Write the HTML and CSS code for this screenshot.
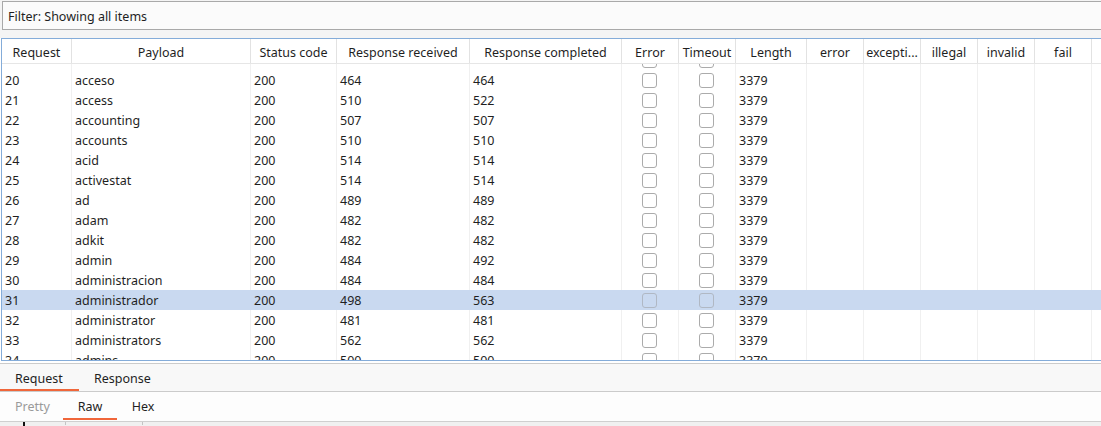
FILE: index.html
```html
<!DOCTYPE html>
<html>
<head>
<meta charset="utf-8">
<link rel="stylesheet" href="styles.css">
</head>
<body>
<div class="top">
  <div class="filter">Filter: Showing all items</div>
</div>
<div class="table">
  <div class="grid thead">
    <span>Request</span><span>Payload</span><span>Status code</span><span>Response received</span><span>Response completed</span><span>Error</span><span>Timeout</span><span>Length</span><span>error</span><span>excepti...</span><span>illegal</span><span>invalid</span><span>fail</span><span></span>
  </div>
  <div class="tbody">
    <div class="rows">
      <div class="grid row"><span></span><span></span><span></span><span></span><span></span><span class="cb"><i></i></span><span class="cb"><i></i></span><span></span><span></span><span></span><span></span><span></span><span></span><span></span></div>
      <div class="grid row"><span>20</span><span>acceso</span><span>200</span><span>464</span><span>464</span><span class="cb"><i></i></span><span class="cb"><i></i></span><span>3379</span><span></span><span></span><span></span><span></span><span></span><span></span></div>
      <div class="grid row"><span>21</span><span>access</span><span>200</span><span>510</span><span>522</span><span class="cb"><i></i></span><span class="cb"><i></i></span><span>3379</span><span></span><span></span><span></span><span></span><span></span><span></span></div>
      <div class="grid row"><span>22</span><span>accounting</span><span>200</span><span>507</span><span>507</span><span class="cb"><i></i></span><span class="cb"><i></i></span><span>3379</span><span></span><span></span><span></span><span></span><span></span><span></span></div>
      <div class="grid row"><span>23</span><span>accounts</span><span>200</span><span>510</span><span>510</span><span class="cb"><i></i></span><span class="cb"><i></i></span><span>3379</span><span></span><span></span><span></span><span></span><span></span><span></span></div>
      <div class="grid row"><span>24</span><span>acid</span><span>200</span><span>514</span><span>514</span><span class="cb"><i></i></span><span class="cb"><i></i></span><span>3379</span><span></span><span></span><span></span><span></span><span></span><span></span></div>
      <div class="grid row"><span>25</span><span>activestat</span><span>200</span><span>514</span><span>514</span><span class="cb"><i></i></span><span class="cb"><i></i></span><span>3379</span><span></span><span></span><span></span><span></span><span></span><span></span></div>
      <div class="grid row"><span>26</span><span>ad</span><span>200</span><span>489</span><span>489</span><span class="cb"><i></i></span><span class="cb"><i></i></span><span>3379</span><span></span><span></span><span></span><span></span><span></span><span></span></div>
      <div class="grid row"><span>27</span><span>adam</span><span>200</span><span>482</span><span>482</span><span class="cb"><i></i></span><span class="cb"><i></i></span><span>3379</span><span></span><span></span><span></span><span></span><span></span><span></span></div>
      <div class="grid row"><span>28</span><span>adkit</span><span>200</span><span>482</span><span>482</span><span class="cb"><i></i></span><span class="cb"><i></i></span><span>3379</span><span></span><span></span><span></span><span></span><span></span><span></span></div>
      <div class="grid row"><span>29</span><span>admin</span><span>200</span><span>484</span><span>492</span><span class="cb"><i></i></span><span class="cb"><i></i></span><span>3379</span><span></span><span></span><span></span><span></span><span></span><span></span></div>
      <div class="grid row"><span>30</span><span>administracion</span><span>200</span><span>484</span><span>484</span><span class="cb"><i></i></span><span class="cb"><i></i></span><span>3379</span><span></span><span></span><span></span><span></span><span></span><span></span></div>
      <div class="grid row selected"><span>31</span><span>administrador</span><span>200</span><span>498</span><span>563</span><span class="cb"><i></i></span><span class="cb"><i></i></span><span>3379</span><span></span><span></span><span></span><span></span><span></span><span></span></div>
      <div class="grid row"><span>32</span><span>administrator</span><span>200</span><span>481</span><span>481</span><span class="cb"><i></i></span><span class="cb"><i></i></span><span>3379</span><span></span><span></span><span></span><span></span><span></span><span></span></div>
      <div class="grid row"><span>33</span><span>administrators</span><span>200</span><span>562</span><span>562</span><span class="cb"><i></i></span><span class="cb"><i></i></span><span>3379</span><span></span><span></span><span></span><span></span><span></span><span></span></div>
      <div class="grid row"><span>34</span><span>admins</span><span>200</span><span>500</span><span>500</span><span class="cb"><i></i></span><span class="cb"><i></i></span><span>3379</span><span></span><span></span><span></span><span></span><span></span><span></span></div>
    </div>
  </div>
</div>
<div class="tabs">
  <div class="tab tab-req active">Request</div>
  <div class="tab">Response</div>
</div>
<div class="subtabs">
  <div class="sub sub-pretty muted">Pretty</div>
  <div class="sub sub-raw active">Raw</div>
  <div class="sub sub-hex">Hex</div>
</div>
<div class="gutter">
  <span class="caret"></span>
  <span class="tick t1"></span>
  <span class="tick t2"></span>
</div>
</body>
</html>
```
FILE: styles.css
```css
html, body {
  margin: 0;
  padding: 0;
  width: 1101px;
  height: 426px;
  overflow: hidden;
  background: #ffffff;
  font-family: "Noto Sans", "Open Sans", "DejaVu Sans", sans-serif;
  font-size: 12.5px;
  color: #1f1f1f;
}

.top {
  background: #f4f4f4;
  padding: 1px 0 8px 2px;
  margin-right: -20px;
}

.filter {
  height: 29px;
  box-sizing: border-box;
  border: 1px solid #a9a9a9;
  border-right: none;
  background: #fbfbfb;
  padding-left: 5px;
  padding-top: 1px;
  display: flex;
  align-items: center;
}

.table {
  margin-left: 1px;
  margin-right: -20px;
  border: 1px solid #84acd9;
  border-right: none;
  background: #ffffff;
}

.grid {
  display: grid;
  grid-template-columns: 70px 179px 86px 133px 152px 57px 57px 71px 57px 57px 57px 57px 57px 1fr;
}

.grid > span {
  box-sizing: border-box;
  border-right: 1px solid #f0f0f0;
  display: flex;
  align-items: center;
  white-space: nowrap;
  overflow: hidden;
}

.grid > span:last-child {
  border-right: none;
}

.thead {
  height: 25px;
  box-sizing: border-box;
  border-bottom: 1px solid #e6e6e6;
}

.thead > span {
  justify-content: center;
  border-right-color: #e2e2e2;
  padding-top: 2px;
}

.tbody {
  height: 296px;
  overflow: hidden;
}

.rows {
  margin-top: -14px;
}

.row {
  height: 20px;
}

.row > span {
  padding-left: 3px;
}

.row > span.cb {
  padding-left: 0;
  justify-content: center;
}

.cb i {
  display: block;
  width: 15px;
  height: 15px;
  box-sizing: border-box;
  border: 1px solid #ababab;
  border-radius: 3px;
  background: #ffffff;
  margin-right: 1px;
}

.row.selected {
  background: #c9d9f0;
}

.row.selected > span {
  border-right-color: transparent;
}

.row.selected .cb i {
  background: #c9d9f0;
  border-color: #b0b8c4;
}

.tabs {
  margin-top: 2px;
  height: 29px;
  box-sizing: border-box;
  border-top: 1px solid #cbcbcb;
  border-bottom: 1px solid #cbcbcb;
  background: #f8f8f8;
  display: flex;
}

.tab {
  height: 27px;
  box-sizing: border-box;
  padding: 3px 0 0 15px;
  border-bottom: 2px solid transparent;
  display: flex;
  align-items: center;
  font-size: 12.5px;
}

.tab-req {
  width: 79px;
}

.tab.active {
  border-bottom-color: #f0663a;
}

.subtabs {
  height: 30px;
  box-sizing: border-box;
  border-bottom: 1px solid #cfcfcf;
  background: #fdfdfd;
  display: flex;
}

.sub {
  height: 28px;
  box-sizing: border-box;
  padding-top: 2px;
  border-bottom: 2px solid transparent;
  display: flex;
  align-items: center;
  justify-content: center;
}

.sub-pretty {
  width: 63px;
  justify-content: flex-start;
  padding-left: 15px;
}

.sub-raw {
  width: 54px;
}

.sub-hex {
  width: 52px;
}

.sub.active {
  border-bottom-color: #f0663a;
}

.muted {
  color: #9a9a9a;
}

.gutter {
  height: 5px;
  background: #f0f0f0;
  display: flex;
  align-items: flex-start;
}

.caret {
  width: 2px;
  height: 5px;
  background: #111111;
  margin-left: 23px;
}

.tick {
  width: 1px;
  height: 3px;
  background: #c4c4c4;
}

.t1 {
  margin-left: 40px;
}

.t2 {
  margin-left: 76px;
}
```
